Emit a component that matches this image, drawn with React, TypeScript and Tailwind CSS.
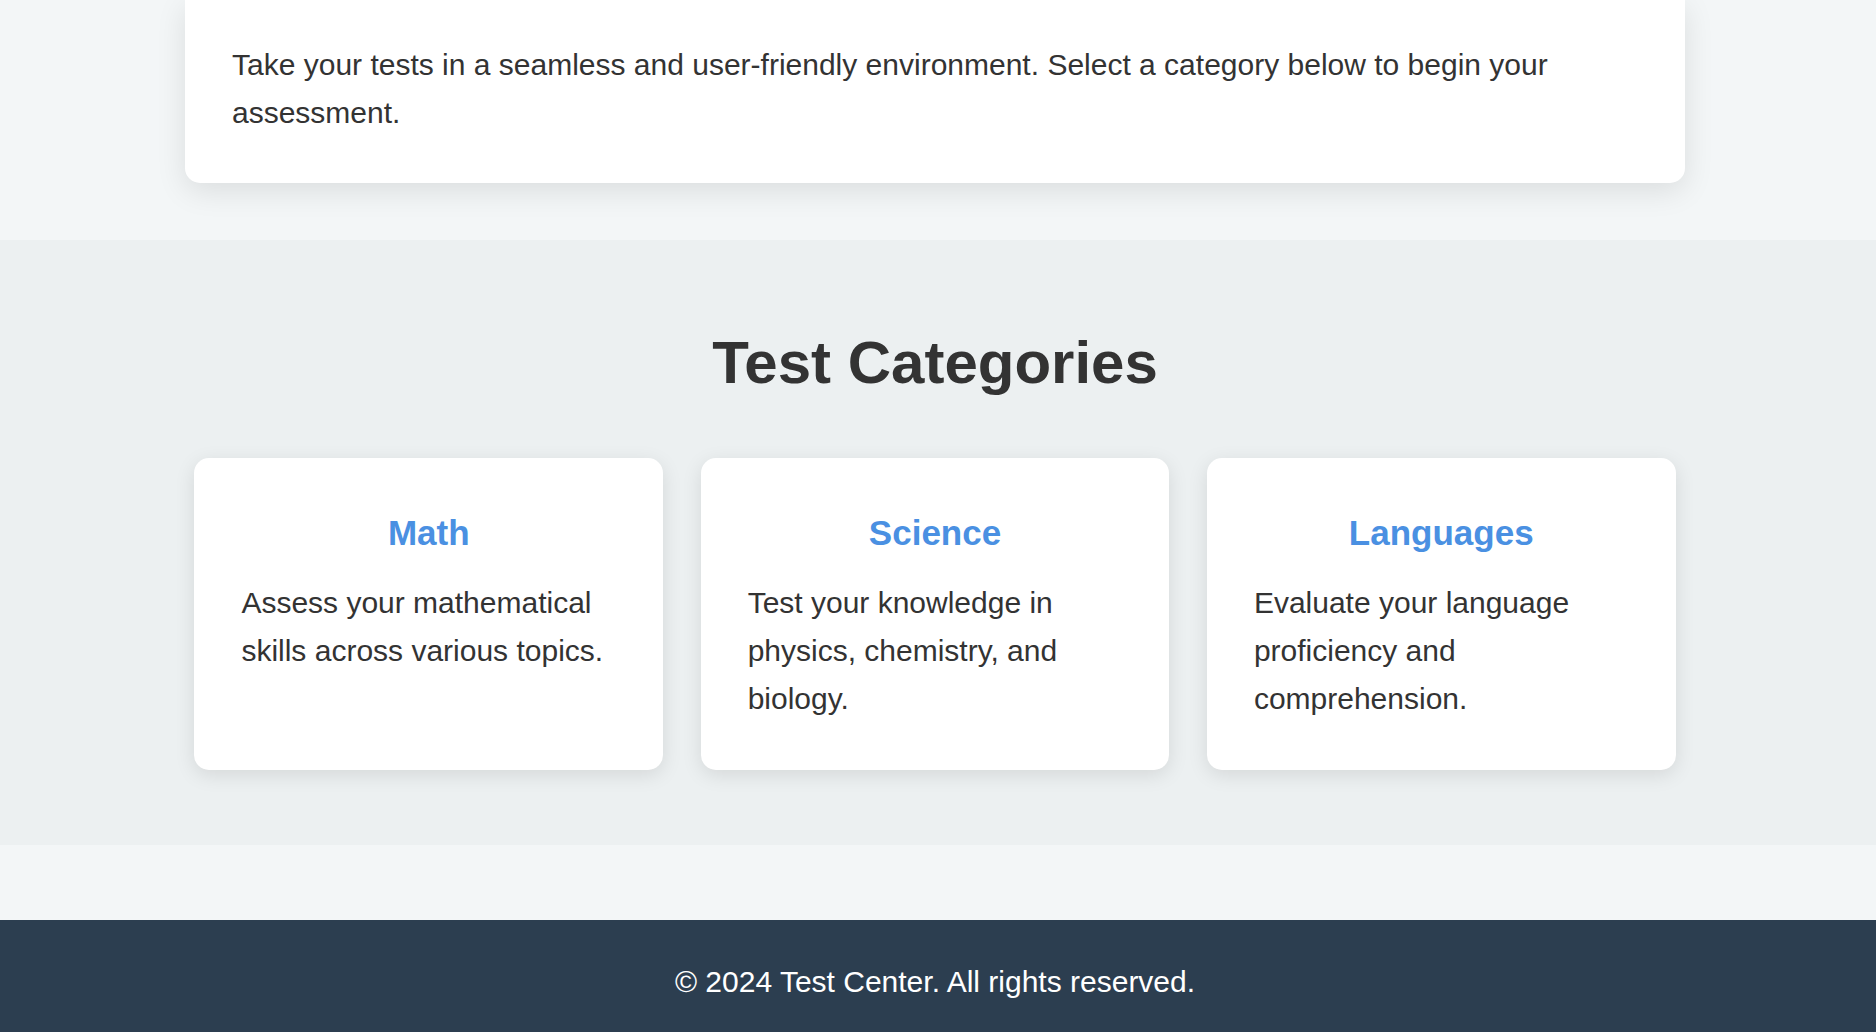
const CATEGORIES = [
  { title: "Math", text: "Assess your mathematical skills across various topics." },
  { title: "Science", text: "Test your knowledge in physics, chemistry, and biology." },
  { title: "Languages", text: "Evaluate your language proficiency and comprehension." },
];

const CategoryCard = ({ title, text }: { title: string; text: string }) => (
  <div className="rounded-[15px] bg-white p-[47px] shadow-[0_5px_20px_rgba(0,0,0,0.1)]">
    <h3 className="text-center text-[35px] font-bold leading-[1.6] text-[#4a90e2]">{title}</h3>
    <p className="mt-[18px] text-[30px] leading-[48px]">{text}</p>
  </div>
);

export default function App() {
  return (
    <div className="min-h-screen bg-[#f3f6f7] font-['Liberation_Sans',Arial,sans-serif] text-[#333]">
      <main className="flex flex-col">
        <div className="flex justify-center pr-[6px]">
          <div className="w-[1500px] rounded-b-[15px] bg-white px-[47px] pt-[41px] pb-[46px] shadow-[0_8px_30px_rgba(0,0,0,0.1)]">
            <p className="text-[30px] leading-[48px]">
              Take your tests in a seamless and user-friendly environment. Select a category below to begin your
              assessment.
            </p>
          </div>
        </div>

        <section className="mt-[57px] bg-[#ecf0f1] py-[75px]">
          <div className="flex justify-center pr-[6px]">
            <div className="w-[1500px]">
              <h2 className="text-center text-[60px] font-bold leading-[1.6]">Test Categories</h2>
              <div className="mt-[47px] grid grid-cols-3 gap-[37.5px] px-[9.375px]">
                {CATEGORIES.map((c) => (
                  <CategoryCard key={c.title} title={c.title} text={c.text} />
                ))}
              </div>
            </div>
          </div>
        </section>
      </main>

      <footer className="mt-[75px] bg-[#2c3e50] pt-[38px] pb-[37px] pr-[6px] text-center text-[30px] leading-[48px] text-white">
        © 2024 Test Center. All rights reserved.
      </footer>
    </div>
  );
}
